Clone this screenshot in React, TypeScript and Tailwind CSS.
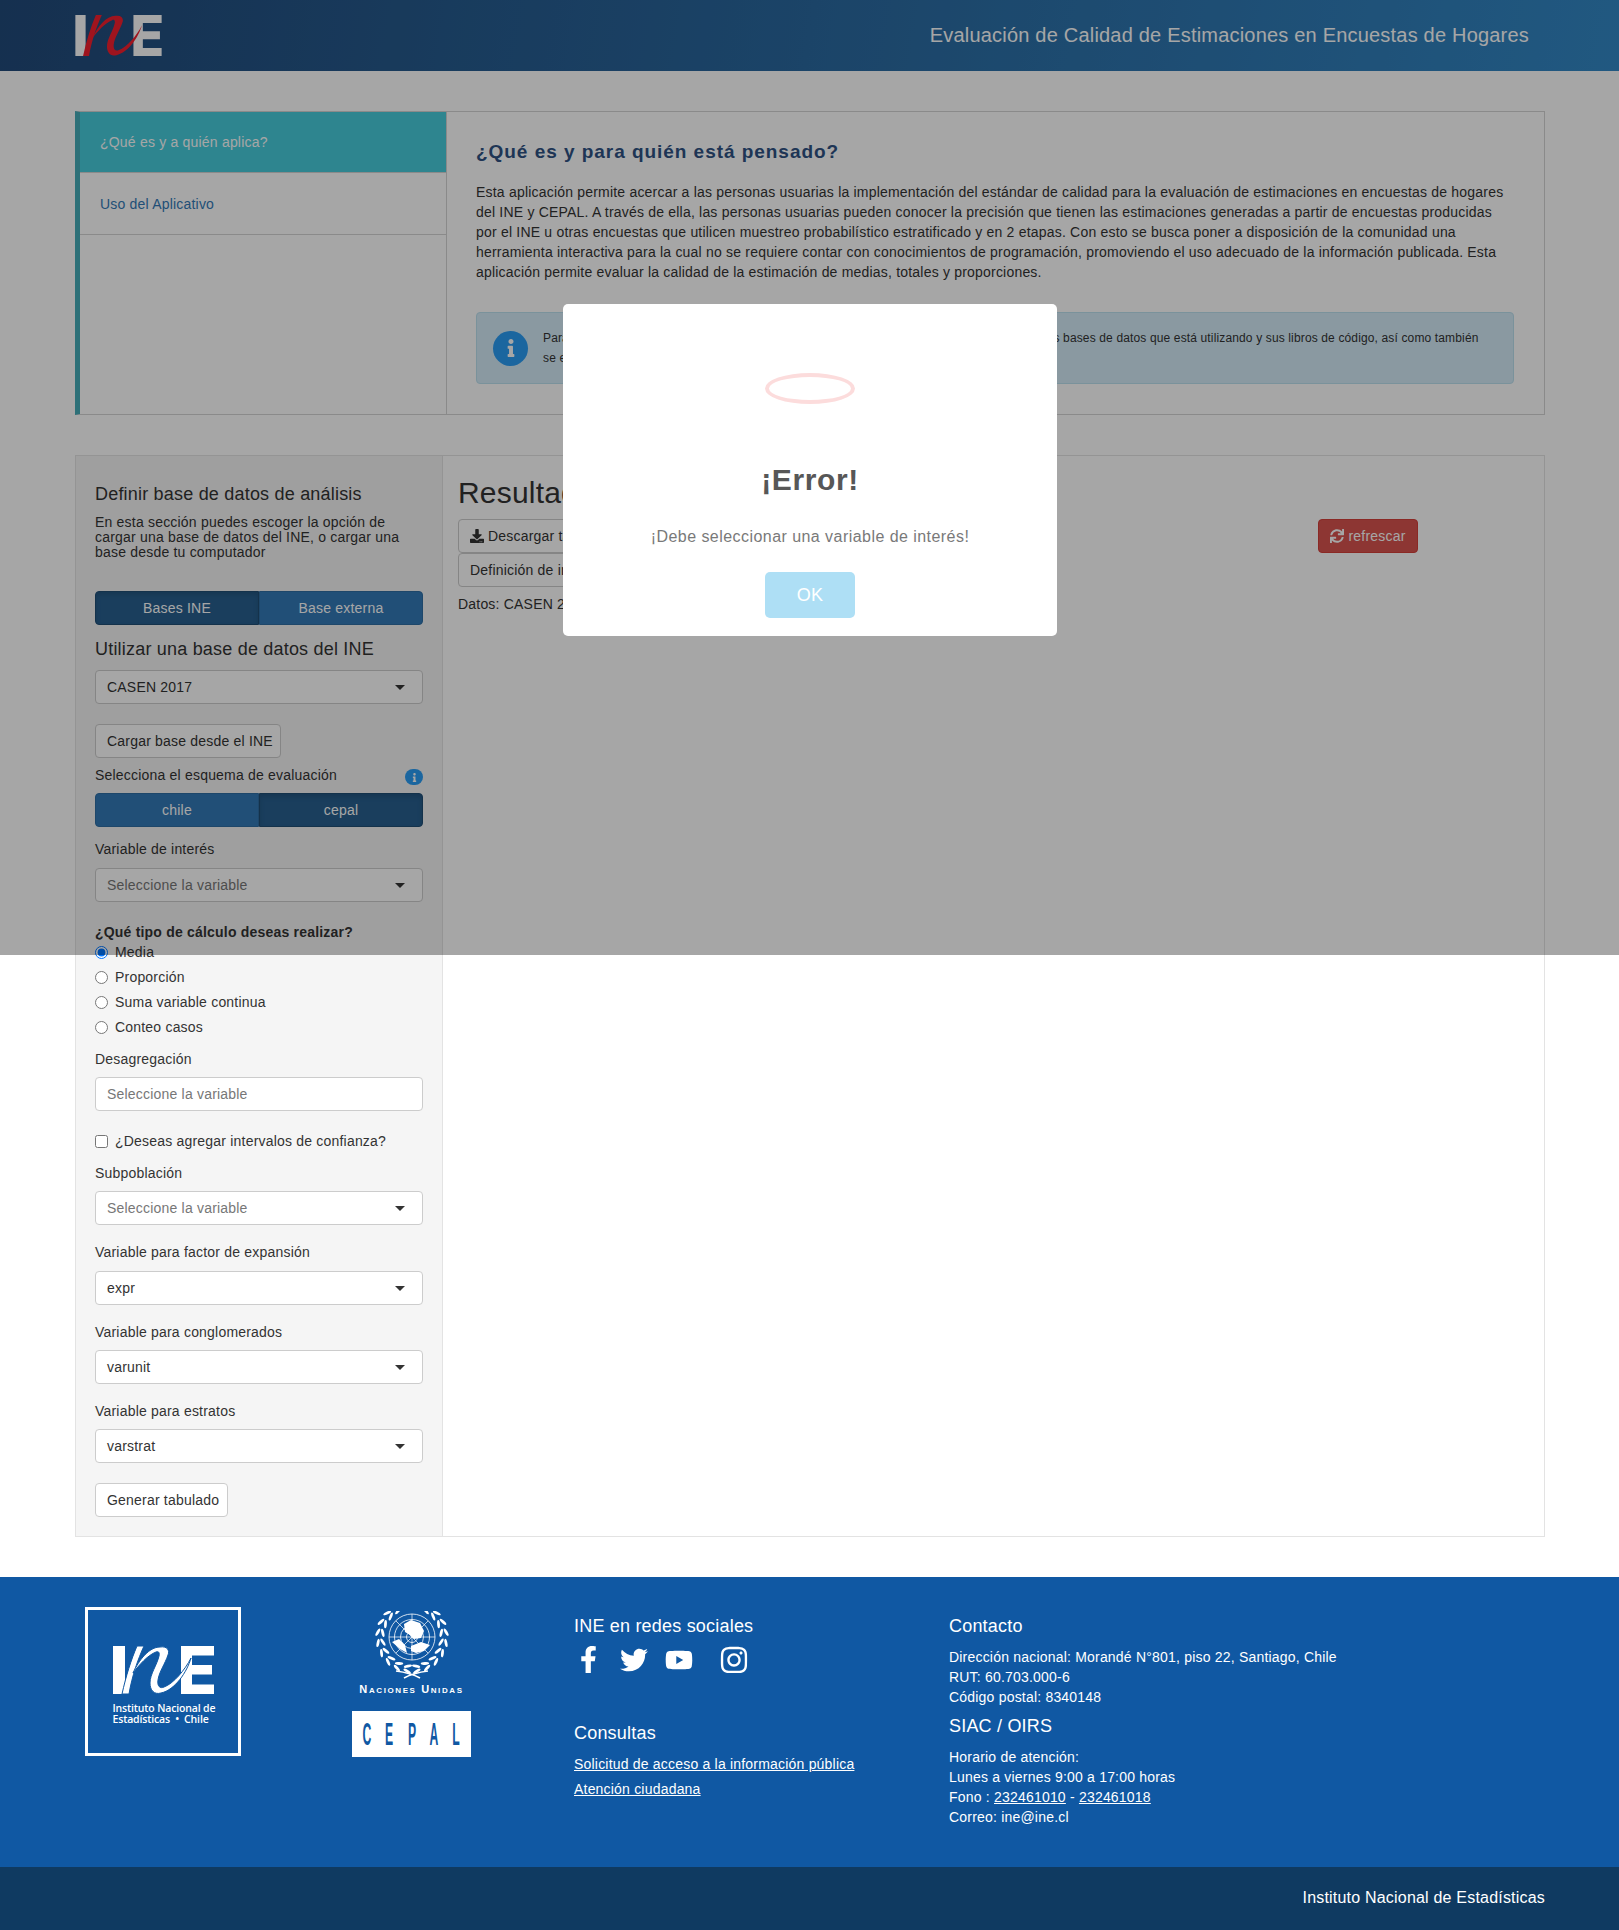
import { FaDownload, FaSync, FaFacebookF, FaTwitter, FaYoutube, FaInstagram, FaInfo } from "react-icons/fa";

function IneMark({ main, accent, gap, className }: { main: string; accent: string; gap?: string; className: string }) {
  return (
    <svg viewBox="0 0 101 48" className={className}>
      <rect x="0" y="0" width="12" height="48" fill={main} />
      <path d="M68 0H101V9.5H79V19H99V28.5H79V38.5H101V48H68Z" fill={main} />
      <path d="M9 48H16C19 30 25 13 31 0H24C18 14 13 30 9 48Z" fill={accent} stroke={gap ?? "none"} strokeWidth={gap ? 1 : 0} />
      <path d="M20 27C26 14 36 1 47 1C54 0 57 4 55 9C52 18 46 26 45 34C44 40 47 43 51 41C60 38 72 24 78 12C74 26 62 44 48 47C41 49 37 44 37 37C37 28 44 19 46 10C47 6 45 5 43 6C35 9 26 19 20 27Z" fill={accent} stroke={gap ?? "none"} strokeWidth={gap ? 1 : 0} />
    </svg>
  );
}

function UnEmblem() {
  const leaves = [0, 1, 2, 3, 4, 5, 6, 7, 8];
  return (
    <svg viewBox="0 0 76 68" className="w-[76px] h-[68px]" fill="none" stroke="#fff">
      <circle cx="38" cy="26" r="23" strokeWidth="0.8" />
      <circle cx="38" cy="26" r="17.5" strokeWidth="0.8" />
      <circle cx="38" cy="26" r="11.5" strokeWidth="0.8" />
      <circle cx="38" cy="26" r="5.5" strokeWidth="0.8" />
      <path d="M15 26H61M38 3V49M21.7 9.7L54.3 42.3M54.3 9.7L21.7 42.3" strokeWidth="0.7" />
      <path d="M30 13L37 9 46 12 50 20 47 27 40 28 36 24 31 21ZM18 31L25 28 31 34 33 42 26 38ZM37 35L47 31 56 34 50 40 42 42 37 40Z" fill="#fff" stroke="none" />
      {leaves.map((i) => {
        const th = ((-62 + i * 18) * Math.PI) / 180;
        const deg = -62 + i * 18;
        const rows = [29.5, 34.5];
        return rows.map((R) => {
          const x = 38 + R * Math.cos(th);
          const y = 26 + R * Math.sin(th);
          return (
            <g key={`${i}-${R}`}>
              <ellipse cx={x} cy={y} rx="1.4" ry="4.2" fill="#fff" stroke="none" transform={`rotate(${deg + (R > 30 ? -22 : 22)} ${x} ${y})`} />
              <ellipse cx={76 - x} cy={y} rx="1.4" ry="4.2" fill="#fff" stroke="none" transform={`rotate(${-deg - (R > 30 ? -22 : 22)} ${76 - x} ${y})`} />
            </g>
          );
        });
      })}
      <path d="M22 60C30 61 37 62 46 67M54 60C46 61 39 62 30 67" strokeWidth="1.6" />
    </svg>
  );
}

function Caret() {
  return <span className="absolute right-[17px] top-[14px] w-0 h-0 border-x-[5px] border-x-transparent border-t-[5px] border-t-[#333]" />;
}

function Sel({ text, placeholder, mt, caret = true }: { text: string; placeholder?: boolean; mt: string; caret?: boolean }) {
  return (
    <div className={`relative h-[34px] bg-white border border-[#ccc] rounded pl-[11px] flex items-center text-[14px] ${placeholder ? "text-[#777]" : "text-[#333]"} ${mt}`}>
      {text}
      {caret && <Caret />}
    </div>
  );
}

function Label({ text, mt }: { text: string; mt: string }) {
  return <div className={`h-5 leading-5 text-[14px] text-[#333] ${mt}`}>{text}</div>;
}

function Toggle({ left, right, active }: { left: string; right: string; active: 0 | 1 }) {
  const on = "bg-[#286090] shadow-[inset_0_3px_5px_rgba(0,0,0,0.125)] border border-[#204d74]";
  const off = "bg-[#337ab7] border border-[#2e6da4]";
  return (
    <div className="flex h-[34px] text-[14px] text-white">
      <div className={`flex-1 flex items-center justify-center rounded-l ${active === 0 ? on : off}`}>{left}</div>
      <div className={`flex-1 flex items-center justify-center rounded-r ${active === 1 ? on : off}`}>{right}</div>
    </div>
  );
}

function Radio({ text, checked, mt }: { text: string; checked?: boolean; mt?: string }) {
  return (
    <label className={`flex items-center h-5 text-[14px] text-[#333] ${mt ?? ""}`}>
      <input type="radio" name="tipo" defaultChecked={checked} className="m-0 mr-[7px]" />
      {text}
    </label>
  );
}

function Btn({ children, className }: { children: React.ReactNode; className?: string }) {
  return <div className={`h-[34px] bg-white border border-[#ccc] rounded flex items-center pl-[11px] pr-[11px] text-[14px] text-[#333] whitespace-nowrap ${className ?? ""}`}>{children}</div>;
}

export default function App() {
  return (
    <div className="relative w-[1619px] h-[1930px] bg-white overflow-hidden text-[#333] tracking-[0.2px] font-['Liberation_Sans',Arial,sans-serif]">
      <header className="h-[71px] bg-[linear-gradient(100deg,#214a7a,#3388c6)] pl-[75px] pr-[90px] flex items-center justify-between">
        <IneMark main="#ffffff" accent="#f5202e" className="w-[87px] h-[41px]" />
        <div className="text-[20px] text-white pb-[2px]">Evaluación de Calidad de Estimaciones en Encuestas de Hogares</div>
      </header>

      <main className="pl-[75px] pr-[74px]">
        <section className="mt-10 h-[304px] flex border border-[#d5d5d5] border-l-[5px] border-l-[#45acb9]">
          <nav className="w-[367px] border-r border-[#d5d5d5] text-[14px]">
            <div className="h-[61px] bg-[#47cddc] text-white pl-5 pt-[20px] leading-5 border-b border-[#d5d5d5]">¿Qué es y a quién aplica?</div>
            <div className="h-[62px] text-[#337ab7] pl-5 pt-[21px] leading-5 border-b border-[#d5d5d5]">Uso del Aplicativo</div>
          </nav>
          <div className="flex-1 pl-[29px] pr-[30px] pt-[30px]">
            <h3 className="h-5 leading-5 text-[19px] font-bold tracking-[0.96px] text-[#2f5283]">¿Qué es y para quién está pensado?</h3>
            <p className="mt-5 pr-2 text-[14px] leading-5">
              Esta aplicación permite acercar a las personas usuarias la implementación del estándar de calidad para la evaluación de estimaciones en encuestas de hogares del INE y CEPAL. A través de ella, las personas usuarias pueden conocer la precisión que tienen las estimaciones generadas a partir de encuestas producidas por el INE u otras encuestas que utilicen muestreo probabilístico estratificado y en 2 etapas. Con esto se busca poner a disposición de la comunidad una herramienta interactiva para la cual no se requiere contar con conocimientos de programación, promoviendo el uso adecuado de la información publicada. Esta aplicación permite evaluar la calidad de la estimación de medias, totales y proporciones.
            </p>
            <div className="mt-[30px] h-[72px] bg-[#d4ebf8] border border-[#bce0ee] rounded flex items-center pl-4">
              <div className="w-[35px] h-[35px] rounded-full bg-[#2a9df4] flex items-center justify-center text-white shrink-0">
                <FaInfo size={18} />
              </div>
              <p className="ml-[15px] text-[12px] leading-5 tracking-[0.14px] whitespace-nowrap">
                Para utilizar esta aplicación correctamente, se recomienda que la persona usuaria conozca las bases de datos que está utilizando y sus libros de código, así como también<br />se encuentre familiarizada con el estándar.
              </p>
            </div>
          </div>
        </section>

        <section className="mt-10 h-[1082px] flex border border-[#e3e3e3]">
          <aside className="w-[367px] bg-[#f5f5f5] border-r border-[#e3e3e3] pl-[19px] pr-[19px] pt-[28px]">
            <div className="h-5 leading-5 text-[18px] text-[#333]">Definir base de datos de análisis</div>
            <p className="mt-[11px] text-[14px] leading-[15.2px]">En esta sección puedes escoger la opción de cargar una base de datos del INE, o cargar una base desde tu computador</p>
            <div className="mt-[30.4px]"><Toggle left="Bases INE" right="Base externa" active={0} /></div>
            <div className="mt-[14px] h-5 leading-5 text-[18px]">Utilizar una base de datos del INE</div>
            <Sel text="CASEN 2017" mt="mt-[11px]" />
            <Btn className="mt-5 w-[186px]">Cargar base desde el INE</Btn>
            <div className="mt-[7px] h-5 leading-5 text-[14px] flex justify-between">
              <span>Selecciona el esquema de evaluación</span>
              <span className="mt-[4px] w-[18px] h-4 rounded-full bg-[#2a9df4] text-white flex items-center justify-center"><FaInfo size={9} /></span>
            </div>
            <div className="mt-2"><Toggle left="chile" right="cepal" active={1} /></div>
            <Label text="Variable de interés" mt="mt-3" />
            <Sel text="Seleccione la variable" placeholder mt="mt-[9px]" />
            <div className="mt-5 h-5 leading-5 text-[14px] font-bold">¿Qué tipo de cálculo deseas realizar?</div>
            <Radio text="Media" checked />
            <Radio text="Proporción" mt="mt-[5px]" />
            <Radio text="Suma variable continua" mt="mt-[5px]" />
            <Radio text="Conteo casos" mt="mt-[5px]" />
            <Label text="Desagregación" mt="mt-3" />
            <Sel text="Seleccione la variable" placeholder mt="mt-2" caret={false} />
            <label className="mt-5 flex items-center h-5 text-[14px]">
              <input type="checkbox" className="m-0 mr-[7px]" />
              ¿Deseas agregar intervalos de confianza?
            </label>
            <Label text="Subpoblación" mt="mt-3" />
            <Sel text="Seleccione la variable" placeholder mt="mt-2" />
            <Label text="Variable para factor de expansión" mt="mt-[17px]" />
            <Sel text="expr" mt="mt-[9px]" />
            <Label text="Variable para conglomerados" mt="mt-[17px]" />
            <Sel text="varunit" mt="mt-2" />
            <Label text="Variable para estratos" mt="mt-[17px]" />
            <Sel text="varstrat" mt="mt-2" />
            <Btn className="mt-[20px] w-[133px]">Generar tabulado</Btn>
          </aside>
          <div className="flex-1 pl-[15px] pr-[126px] pt-[19px]">
            <h2 className="h-9 leading-9 text-[30px] text-[#333]">Resultados</h2>
            <div className="mt-2 flex justify-between">
              <Btn><FaDownload size={14} className="mr-[4px]" />Descargar tabla de resultados</Btn>
              <div className="h-[34px] w-[100px] bg-[#d9534f] border border-[#d43f3a] rounded flex items-center justify-center text-[14px] text-white"><FaSync size={14} className="mr-[4px]" />refrescar</div>
            </div>
            <Btn className="mt-0 w-fit">Definición de indicadores de calidad</Btn>
            <div className="mt-[7px] h-5 leading-5 text-[14px]">Datos: CASEN 2017</div>
          </div>
        </section>
      </main>

      <footer className="mt-10 h-[290px] bg-[#1058a3] text-white relative flex">
        <div className="ml-[85px] mt-[30px] w-[156px] h-[149px] border-[3px] border-white flex flex-col items-center pt-[36px]">
          <IneMark main="#ffffff" accent="#ffffff" gap="#1058a3" className="w-[101px] h-12" />
          <div className="mt-[9px] text-[10.5px] leading-[11px] font-semibold w-[101px] whitespace-nowrap font-['Open_Sans',sans-serif] tracking-[-0.15px]">
            <div>Instituto Nacional de</div>
            <div>Estadísticas&nbsp;&nbsp;•&nbsp;&nbsp;Chile</div>
          </div>
        </div>
        <div className="ml-[111px] mt-[34px] w-[119px] flex flex-col items-center">
          <UnEmblem />
          <div className="mt-[4px] h-3 leading-3 text-[11px] font-bold tracking-[1.6px] whitespace-nowrap [font-variant:small-caps]">Naciones Unidas</div>
          <div className="mt-[16px] w-[119px] h-[46px] bg-white text-[#1058a3] flex items-center justify-between px-[11px] text-[32px] font-bold leading-none">
            {["C", "E", "P", "A", "L"].map((c) => <span key={c} className="w-2 flex justify-center scale-x-[0.38]">{c}</span>)}
          </div>
        </div>
        <div className="ml-[103px] w-[375px] pt-[39px]">
          <div className="h-5 leading-5 text-[18px]">INE en redes sociales</div>
          <div className="mt-[10px] h-[27px] relative flex items-center">
            <FaFacebookF size={27} className="ml-[1px]" />
            <FaTwitter size={28} className="ml-[18px]" />
            <FaYoutube size={28} className="ml-[17px]" />
            <FaInstagram size={30} className="ml-[26px]" />
          </div>
          <div className="mt-[50px] h-5 leading-5 text-[18px]">Consultas</div>
          <a className="block mt-[11px] h-5 leading-5 text-[14px] underline">Solicitud de acceso a la información pública</a>
          <a className="block mt-[5px] h-5 leading-5 text-[14px] underline">Atención ciudadana</a>
        </div>
        <div className="pt-[39px] text-[14px] leading-5">
          <div className="h-5 text-[18px]">Contacto</div>
          <div className="mt-[11px]">Dirección nacional: Morandé N°801, piso 22, Santiago, Chile</div>
          <div>RUT: 60.703.000-6</div>
          <div>Código postal: 8340148</div>
          <div className="mt-[9px] h-5 text-[18px]">SIAC / OIRS</div>
          <div className="mt-[11px]">Horario de atención:</div>
          <div>Lunes a viernes 9:00 a 17:00 horas</div>
          <div>Fono : <a className="underline">232461010</a> - <a className="underline">232461018</a></div>
          <div>Correo: ine@ine.cl</div>
        </div>
      </footer>
      <div className="h-[63px] bg-[#0f3a61] text-white text-[16px] flex items-center justify-end pr-[74px] pb-[2px]">Instituto Nacional de Estadísticas</div>

      <div className="absolute left-0 top-0 w-full h-[955px] bg-black/35">
        <div className="absolute left-[563px] top-[304px] w-[494px] h-[332px] bg-white rounded-[5px] flex flex-col items-center pt-[69px]">
          <div className="w-[90px] h-[31px] rounded-[50%] border-[4px] border-[#fcdcdc]" />
          <h2 className="mt-[58px] h-9 leading-9 text-[30px] font-bold tracking-[0.6px] text-[#575757]">¡Error!</h2>
          <p className="mt-[29px] h-5 leading-5 text-[16px] tracking-[0.45px] text-[#797979]">¡Debe seleccionar una variable de interés!</p>
          <div className="mt-[25px] w-[90px] h-[46px] rounded-[5px] bg-[#aedff5] text-white text-[18px] flex items-center justify-center">OK</div>
        </div>
      </div>
    </div>
  );
}
